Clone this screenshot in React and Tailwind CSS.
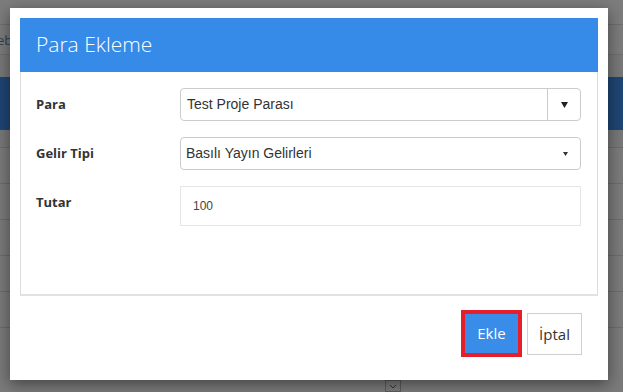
import { useState } from "react"

function Row({ label, children, labelClass = "" }) {
    return (
        <div className="flex items-start">
            <div className={`w-[144px] shrink-0 text-[13px] font-bold text-[#333] ${labelClass}`}>{label}</div>
            <div className="flex-1">{children}</div>
        </div>
    )
}

export default function App() {
    const [amount] = useState("100")

    return (
        <div className="relative w-[623px] h-[392px] overflow-hidden bg-[#7a7a7a] font-['Open_Sans',sans-serif]">
            {/* dimmed page behind the dialog */}
            <div className="flex flex-col">
                <div className="h-[25px] bg-[#7c7c7c] border-b border-[#6c6c6c]" />
                <div className="h-[30px] bg-[#7b7b7b] border-b border-[#6e6e6e] ml-[-3px] text-[13px] leading-[30px] text-[#34404e]">eb</div>
                <div className="h-[22px] bg-[#777]" />
                <div className="h-[53px] bg-[#1e4573]" />
                <div className="h-[18px] bg-[#777] border-b border-[#6b6b6b]" />
                <div className="h-[36px] bg-[#7a7a7a] border-b border-[#6b6b6b]" />
                <div className="h-[36px] bg-[#7a7a7a] border-b border-[#6b6b6b]" />
                <div className="h-[36px] bg-[#7a7a7a] border-b border-[#6b6b6b]" />
                <div className="h-[36px] bg-[#7a7a7a] border-b border-[#6b6b6b]" />
                <div className="h-[36px] bg-[#7a7a7a] border-b border-[#6b6b6b]" />
            </div>
            <div className="absolute left-[385px] top-[380px] w-[16px] h-[12px] border border-[#5a5a5a] flex items-center justify-center">
                <svg width="8" height="5" viewBox="0 0 8 5"><path d="M1 1l3 3 3-3" fill="none" stroke="#333" strokeWidth="1" /></svg>
            </div>

            {/* dialog */}
            <div className="absolute left-[10px] top-[8px] w-[598px] h-[372px] bg-white shadow-[0_4px_14px_rgba(0,0,0,0.45)] p-[10px] flex flex-col">
                <div className="h-[54px] bg-[#368ae8] flex items-center pl-[16px]">
                    <h2 className="text-[21px] font-light text-white">Para Ekleme</h2>
                </div>
                <div className="h-[224px] border border-t-0 border-[#dcdcdc] border-b-2 border-b-[#e2e2e2] pt-[16px] pl-[15px] pr-[16px] flex flex-col gap-[16px]">
                    <Row label="Para" labelClass="pt-[7px]">
                        <div className="h-[33px] flex border border-[#ccc] rounded-[4px] font-['Liberation_Sans',Arial,sans-serif] text-[14px] text-[#333]">
                            <div className="flex-1 flex items-center pl-[6px]">Test Proje Parası</div>
                            <div className="w-[33px] border-l border-[#ccc] flex items-center justify-center">
                                <svg width="7" height="6" viewBox="0 0 7 6"><path d="M0 0h7L3.5 6z" fill="#222" /></svg>
                            </div>
                        </div>
                    </Row>
                    <Row label="Gelir Tipi" labelClass="pt-[7px]">
                        <div className="h-[33px] flex items-center border border-[#ccc] rounded-[4px] font-['Liberation_Sans',Arial,sans-serif] text-[14px] text-[#333] pl-[5px] pr-[12px]">
                            <span className="flex-1">Basılı Yayın Gelirleri</span>
                            <svg width="5" height="4" viewBox="0 0 5 4"><path d="M0 0h5L2.5 4z" fill="#333" /></svg>
                        </div>
                    </Row>
                    <Row label="Tutar" labelClass="pt-[7px]">
                        <div className="h-[40px] flex items-center border border-[#e6e6e6] font-['Liberation_Sans',Arial,sans-serif] text-[12px] text-[#444] pl-[12px]">
                            {amount}
                        </div>
                    </Row>
                </div>
                <div className="flex-1 flex items-start justify-end gap-[5px] pt-[14px] pr-[16px]">
                    <button className="w-[61px] h-[47px] border-[4px] border-[#e41f2b] bg-[#3a8ce9] text-white text-[15px]">Ekle</button>
                    <button className="mt-[3px] w-[55px] h-[42px] border border-[#cfcfcf] bg-white text-[#333] text-[15px]">İptal</button>
                </div>
            </div>
        </div>
    )
}
